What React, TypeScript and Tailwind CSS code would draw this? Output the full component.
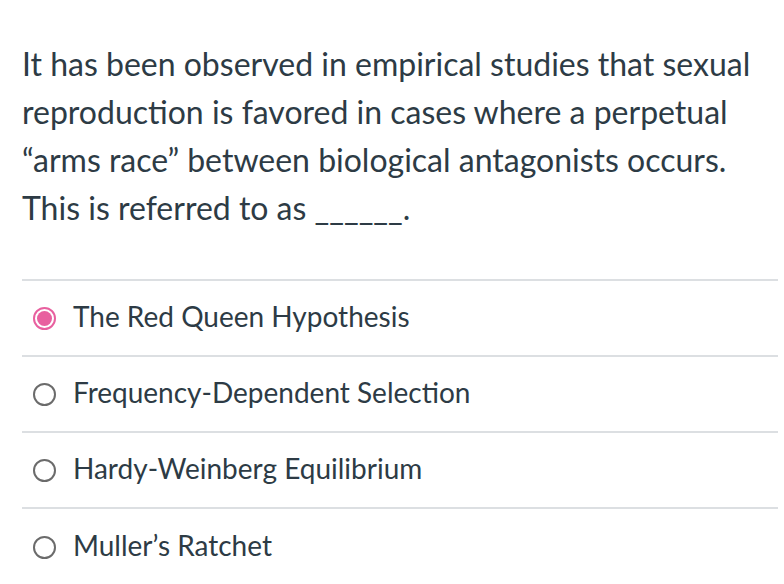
const options = [
  "The Red Queen Hypothesis",
  "Frequency-Dependent Selection",
  "Hardy-Weinberg Equilibrium",
  "Muller’s Ratchet",
];

export default function App() {
  return (
    <div className="min-h-screen bg-white pl-[22px] pr-[6px] pt-[40px] font-['Lato',sans-serif] text-[#2d3b45]">
      <p className="text-[32px] leading-[48px]">
        It has been observed in empirical studies that sexual reproduction is favored in cases where a perpetual
        “arms race” between biological antagonists occurs. This is referred to as ______.
      </p>
      <div className="mt-[47px] border-t-2 border-[#dcdfe2]">
        {options.map((opt, i) => (
          <div key={opt} className="flex h-[76px] items-center border-b-2 border-[#dcdfe2] last:border-b-0">
            {i === 0 ? (
              <span className="ml-[11px] flex h-[23px] w-[23px] items-center justify-center rounded-full border-2 border-[#e8609f]">
                <span className="h-[15px] w-[15px] rounded-full bg-[#e8609f]" />
              </span>
            ) : (
              <span className="ml-[11px] h-[23px] w-[23px] rounded-full border-2 border-[#6b6b6b]" />
            )}
            <span className="ml-[17px] -mt-[4px] text-[28px]">{opt}</span>
          </div>
        ))}
      </div>
    </div>
  );
}
